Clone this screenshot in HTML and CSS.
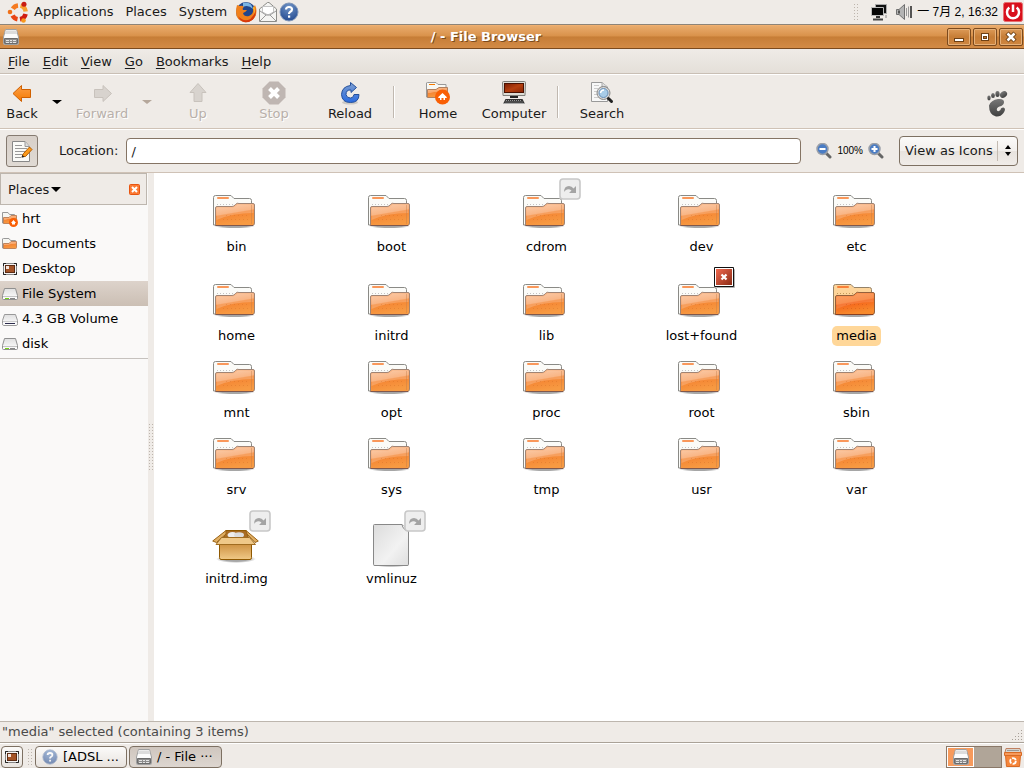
FILE: index.html
```html
<!DOCTYPE html>
<html lang="en">
<head>
<meta charset="utf-8">
<title>/ - File Browser</title>
<link rel="stylesheet" href="styles.css">
</head>
<body>
<svg class="sprite" aria-hidden="true">
  <defs>
    <linearGradient id="g-front" x1="0" y1="0" x2="0.3" y2="1"><stop offset="0" stop-color="#fac6a0"/><stop offset="0.5" stop-color="#f8a468"/><stop offset="0.55" stop-color="#f58634"/><stop offset="1" stop-color="#f79a42"/></linearGradient>
    <linearGradient id="g-hot" x1="0" y1="0" x2="0.3" y2="1"><stop offset="0" stop-color="#fb9a5a"/><stop offset="0.5" stop-color="#f98037"/><stop offset="0.55" stop-color="#f5661c"/><stop offset="1" stop-color="#f78a2c"/></linearGradient>
    <linearGradient id="g-drive" x1="0" y1="0" x2="0" y2="1"><stop offset="0" stop-color="#e0e0e0"/><stop offset="1" stop-color="#ffffff"/></linearGradient>
    <linearGradient id="g-orange" x1="0" y1="0" x2="0" y2="1"><stop offset="0" stop-color="#fba04a"/><stop offset="1" stop-color="#f57900"/></linearGradient>
    <linearGradient id="g-blue" x1="0" y1="0" x2="0" y2="1"><stop offset="0" stop-color="#7f9fd0"/><stop offset="1" stop-color="#2a6be0"/></linearGradient>
    <linearGradient id="g-screen" x1="0" y1="0" x2="1" y2="1"><stop offset="0" stop-color="#7a1c04"/><stop offset="0.5" stop-color="#b54010"/><stop offset="1" stop-color="#8a2404"/></linearGradient>
    <linearGradient id="g-box" x1="0" y1="0" x2="0" y2="1"><stop offset="0" stop-color="#c98a38"/><stop offset="1" stop-color="#f0c987"/></linearGradient>
    <linearGradient id="g-paper" x1="0" y1="0" x2="1" y2="1"><stop offset="0" stop-color="#dcdcdc"/><stop offset="0.6" stop-color="#f2f2f2"/><stop offset="1" stop-color="#dedede"/></linearGradient>
    <linearGradient id="g-foot" x1="0" y1="0" x2="0" y2="1"><stop offset="0" stop-color="#787878"/><stop offset="1" stop-color="#404040"/></linearGradient>
    <linearGradient id="g-red" x1="0" y1="0" x2="1" y2="1"><stop offset="0" stop-color="#f06a50"/><stop offset="1" stop-color="#8a2a14"/></linearGradient>
    <radialGradient id="g-help" cx="0.5" cy="0.2" r="0.9"><stop offset="0" stop-color="#6f93c6"/><stop offset="1" stop-color="#1d448c"/></radialGradient>
    <radialGradient id="g-shadow"><stop offset="0.6" stop-color="#000" stop-opacity="0.35"/><stop offset="1" stop-color="#000" stop-opacity="0"/></radialGradient>
  </defs>

  <symbol id="i-folder" viewBox="0 0 49 47">
    <rect x="2" y="34" width="41" height="4.500" rx="2" fill="url(#g-shadow)"/>
    <path d="M1.500 35V7.500Q1.500 5.500 3.500 5.500H19l3 3H37.500Q39.500 8.500 39.500 10.500V35Z" fill="#fbfbf8" stroke="#8a8a86"/>
    <path d="M5 14.500H24" stroke="#c4c4c4" stroke-dasharray="1 2"/>
    <rect x="5" y="7" width="12" height="2" rx="1" fill="#f9975a"/>
    <path d="M3.500 35.500V18Q3.500 16.500 5 16.500H20Q22 16.500 23.500 14.500T27 13.500H41Q42.500 13.500 42.500 15V33Q42.500 35.500 40.500 35.500Z" fill="url(#g-front)" stroke="#a08474"/>
    <path d="M4.500 30V19Q4.500 17.500 6 17.500H21Q23 17 24.500 15.500T28 14.500H41.500V23Q20 23 4.500 30Z" fill="#fff" opacity="0.2"/>
    <path d="M3.500 35.500H41" stroke="#80584c"/>
    <path d="M39.500 15V34" stroke="#c07c48" opacity="0.4"/>
    <path d="M14 25.500H38M11 29.500H38" stroke="#c86420" stroke-dasharray="1 3" opacity="0.3"/>
  </symbol>

  <symbol id="i-folder-hot" viewBox="0 0 49 47">
    <rect x="2" y="34" width="41" height="4.500" rx="2" fill="url(#g-shadow)"/>
    <path d="M1.500 35V7.500Q1.500 5.500 3.500 5.500H19l3 3H37.500Q39.500 8.500 39.500 10.500V35Z" fill="#fdd49a" stroke="#948268"/>
    <path d="M5 14.500H24" stroke="#c49a5c" stroke-dasharray="1 2"/>
    <rect x="5" y="7" width="12" height="2" rx="1" fill="#f98038"/>
    <path d="M3.500 35.500V18Q3.500 16.500 5 16.500H20Q22 16.500 23.500 14.500T27 13.500H41Q42.500 13.500 42.500 15V33Q42.500 35.500 40.500 35.500Z" fill="url(#g-hot)" stroke="#94603c"/>
    <path d="M4.500 30V19Q4.500 17.500 6 17.500H21Q23 17 24.500 15.500T28 14.500H41.500V23Q20 23 4.500 30Z" fill="#fff" opacity="0.12"/>
    <path d="M3.500 35.500H41" stroke="#8a4020"/>
    <path d="M14 25.500H38M11 29.500H38" stroke="#b04410" stroke-dasharray="1 3" opacity="0.3"/>
  </symbol>

  <symbol id="i-box" viewBox="0 0 49 47">
    <ellipse cx="24" cy="37" rx="20" ry="4" fill="url(#g-shadow)"/>
    <path d="M14 8.500H34L38 20H10Z" fill="#a86c24" stroke="#8f5902"/>
    <ellipse cx="20.500" cy="13" rx="5" ry="3" fill="#eee"/><ellipse cx="27" cy="13" rx="5" ry="2.800" fill="#ddd"/>
    <path d="M14 8.500L.7 19L4.500 20.500L14 12ZM34 8.500L46.300 19L43 20.500L35 12Z" fill="#e0ae62" stroke="#9a6214"/>
    <path d="M7.500 20V35.500Q7.500 37.500 9 37.500H38Q39.500 37.500 39.500 35.500V20Z" fill="url(#g-box)" stroke="#8f5902"/>
    <path d="M9.500 15.500H37.500L43.500 22.500H4Z" fill="#efc888" stroke="#a06c20"/>
  </symbol>

  <symbol id="i-page" viewBox="0 0 49 47">
    <rect x="5" y="41" width="38" height="4" rx="2" fill="url(#g-shadow)"/>
    <path d="M7.500 2.500H35L41.500 9V42.500Q41.500 43.500 40 43.500H8Q6.500 43.500 6.500 42.500V3.500Q6.500 2.500 7.500 2.500Z" fill="url(#g-paper)" stroke="#888"/>
    <path d="M35 2.500Q36 8 41.500 9" fill="#fff" stroke="#888"/>
  </symbol>

  <symbol id="i-link" viewBox="0 0 22 22">
    <rect x="1" y="1" width="20" height="20" rx="3" fill="#eee" stroke="#c8c8c8" stroke-width="1.600"/>
    <path d="M5 14Q5 8 10 8Q13 8 14.500 10.500L17 8V15H10L12.500 12.500Q10 10.500 8 11.500Q6 12 5 14Z" fill="#a4a4a4"/>
  </symbol>
  <symbol id="i-deny" viewBox="0 0 22 22">
    <rect x="2" y="2" width="19" height="19" rx="1" fill="#000" opacity="0.3"/>
    <rect x="0" y="0" width="20" height="20" rx="1" fill="#111"/><rect x="1" y="1" width="18" height="18" fill="#fff"/>
    <rect x="2" y="2" width="16" height="16" fill="url(#g-red)"/>
    <path d="M7.500 7.500L12.500 12.500M12.500 7.500L7.500 12.500" stroke="#fff" stroke-width="2.200"/>
  </symbol>

  <symbol id="i-cabinet" viewBox="0 0 16 16">
    <path d="M2.500 .5H13.500L15.500 8V14.500Q15.500 15.500 14.500 15.500H1.500Q.5 15.500 .5 14.500V8Z" fill="#fcfcfc" stroke="#a0a0a0"/>
    <path d="M2.500 1.500H13.500L14 5H2Z" fill="#dcdcdc"/>
    <path d="M1.500 9.500H14.500V14.500H1.500Z" fill="#8c8c8c" stroke="#6c6c6c"/>
    <path d="M3 11.500H6M7 11.500H9M10 11.500H13M3 13.500H6M7 13.500H9M10 13.500H13" stroke="#e4e4e4"/>
  </symbol>
  <symbol id="i-drive" viewBox="0 0 16 16">
    <path d="M2.500 2.500H13.500L15.500 9.500V12.500Q15.500 13.500 14.500 13.500H1.500Q.5 13.500 .5 12.500V9.500Z" fill="url(#g-drive)" stroke="#909090"/>
    <path d="M1 10.500H15" stroke="#c4c4c4"/><path d="M8 12.500H13" stroke="#888"/><path d="M3 12.500H7" stroke="#73d216"/>
  </symbol>
  <symbol id="i-volume" viewBox="0 0 16 16">
    <path d="M2.500 3.500H13.500L15.500 9.500V12.500Q15.500 14.500 14.500 14.500H1.500Q.5 14.500 .5 12.500V9.500Z" fill="url(#g-drive)" stroke="#999"/>
    <path d="M1 10.500H15" stroke="#ccc"/><path d="M3 12.500H13" stroke="#2c2c4c"/>
  </symbol>
  <symbol id="i-desktop" viewBox="0 0 16 16">
    <rect x="1.500" y="2.500" width="13" height="11" fill="#f4f4f4" stroke="#888"/>
    <rect x="3.500" y="4.500" width="9" height="7" fill="#a45428" stroke="#5c2c14"/><rect x="4" y="5" width="3" height="3" fill="#f4e4dc"/>
    <path d="M1.500 5V2.500H4M12 2.500H14.500V5M14.500 11V13.500H12M4 13.500H1.500V11" fill="none" stroke="#222"/>
  </symbol>
  <symbol id="i-folder-small" viewBox="0 0 16 16">
    <path d="M.5 12V3Q.5 2.500 1.500 2.500H7L8.500 4.500H13.500V12Z" fill="#f6f6f2" stroke="#999"/>
    <path d="M1.500 12.500V7.500H7L9 5.500H14.500V11.500Q14.500 12.500 13.500 12.500Z" fill="url(#g-front)" stroke="#c0845c"/>
  </symbol>
  <symbol id="i-home-small" viewBox="0 0 16 16">
    <path d="M.5 12V1.500H6L7.500 3.500H12.500V12Z" fill="#f6f6f2" stroke="#999"/>
    <path d="M1.500 12.500V6.500H7L9 4.500H14.500V12.500Z" fill="url(#g-front)" stroke="#c0845c"/>
    <circle cx="11.500" cy="11.500" r="4.500" fill="#f95f05"/><path d="M9 12L11.500 9L14 12H13V13.500H10V12Z" fill="#fff"/>
  </symbol>
  <symbol id="i-home" viewBox="0 0 24 24">
    <path d="M.5 16V2Q.5 1.500 1.500 1.500H10L12 3.500H20V16Z" fill="#f8f8f4" stroke="#999"/><path d="M3 3.500H9" stroke="#f57900"/>
    <path d="M1.500 16.500V8.500H10L13 6.500H21.500V16.500Z" fill="url(#g-front)" stroke="#b08060"/>
    <circle cx="16.500" cy="16" r="7.500" fill="#f95f05"/><path d="M12.300 16L16.500 12L20.700 16V17H19V19H17.500V17H15.500V19H14V17H12.300Z" fill="#fff"/>
  </symbol>
  <symbol id="i-computer" viewBox="0 0 24 24">
    <path d="M.5 1.500Q.5 .5 1.500 .5H22.500Q23.500 .5 23.500 1.500L23 14.500H1Z" fill="#ddddd6" stroke="#80807c"/>
    <rect x="2.500" y="2.500" width="19" height="9" fill="url(#g-screen)" stroke="#4a1000"/>
    <path d="M8 15H16V17H8Z" fill="#222"/><path d="M3.500 18H20.500L22.500 22H1.500Z" fill="#333"/>
    <path d="M4 19.500H20M3.500 21H21" stroke="#999" stroke-dasharray="1 1"/><path d="M1 22.500H23" stroke="#aaa"/>
  </symbol>
  <symbol id="i-search" viewBox="0 0 24 24">
    <path d="M1.500 1.500H12L17.500 6V20.500H1.500Z" fill="#f8f8f8" stroke="#999"/><path d="M12 1.500V6H17.500" fill="#ddd" stroke="#aaa"/>
    <path d="M4 4.500H9M4 7.500H8M4 10.500H7M4 13.500H8M4 16.500H9" stroke="#ccc"/>
    <circle cx="13.500" cy="12" r="6.500" fill="#d8d8d8" stroke="#888"/><circle cx="13.500" cy="12" r="4.500" fill="#a8cce8" stroke="#6a90b8"/>
    <path d="M10.500 12Q11 9 14 9" stroke="#fff" stroke-width="1.500" fill="none"/>
    <path d="M18.500 17.500L21.500 20.500" stroke="#222" stroke-width="3" stroke-linecap="round"/>
  </symbol>
  <symbol id="i-back" viewBox="0 0 24 24">
    <path d="M3 12.500L11.500 4.500V8.500H20.500V16.500H11.500V20.500Z" fill="url(#g-orange)" stroke="#d06000" stroke-linejoin="round"/>
  </symbol>
  <symbol id="i-forward" viewBox="0 0 24 24">
    <path d="M21.500 12.500L13 4.500V8.500H4.500V16.500H13V20.500Z" fill="#d8d3ce" stroke="#c8c2bc" stroke-linejoin="round"/>
  </symbol>
  <symbol id="i-up" viewBox="0 0 24 24">
    <path d="M12 2.500L20 11.500H16V20.500H8V11.500H4Z" fill="#d8d3ce" stroke="#c8c2bc" stroke-linejoin="round"/>
  </symbol>
  <symbol id="i-stop" viewBox="0 0 24 24">
    <path d="M7.500 .5H16.500L23.500 7.500V16.500L16.500 23.500H7.500L.5 16.500V7.500Z" fill="#bfb6b2"/>
    <path d="M7.500 7.500L16.500 16.500M16.500 7.500L7.500 16.500" stroke="#fff" stroke-width="4"/>
  </symbol>
  <symbol id="i-reload" viewBox="0 0 24 24">
    <ellipse cx="12" cy="21.500" rx="8" ry="2" fill="#000" opacity="0.15"/>
    <path d="M12.500 1.500L18.500 6.500L13 11.500V9Q8 8.500 8 13.500Q8.500 17 12.500 17Q15.500 17 16 13.500H21Q21 21.500 12.500 21.500Q4 21.500 3.500 13.500Q4 5.500 12.500 4.500Z" fill="url(#g-blue)" stroke="#24509c" stroke-linejoin="round"/>
  </symbol>
  <symbol id="i-edit" viewBox="0 0 24 24">
    <path d="M2.500 2.500H15L19.500 7.500V22.500H2.500Z" fill="#fbfbf8" stroke="#888"/><path d="M15 2.500V7.500H19.500" fill="#ddd" stroke="#999"/>
    <path d="M5 6.500H12M5 9.500H17M5 12.500H17M5 15.500H13M5 18.500H11" stroke="#999"/>
    <path d="M12 17.500L13.500 14.500L19.500 8L22 10.500L15.500 17.500Z" fill="#fb9a1c" stroke="#b45c00"/><path d="M11.500 18.800L12.500 16L14.500 18Z" fill="#222"/>
  </symbol>
  <symbol id="i-zoom-out" viewBox="0 0 16 16">
    <path d="M10.500 10.500L14 14" stroke="#666" stroke-width="3" stroke-linecap="round"/>
    <circle cx="6.500" cy="6" r="5.500" fill="#4a7cc4" stroke="#9a9fa8" stroke-width="1.500"/><rect x="3.500" y="5" width="6" height="2" fill="#fff"/>
  </symbol>
  <symbol id="i-zoom-in" viewBox="0 0 16 16">
    <path d="M10.500 10.500L14 14" stroke="#666" stroke-width="3" stroke-linecap="round"/>
    <circle cx="6.500" cy="6" r="5.500" fill="#4a7cc4" stroke="#9a9fa8" stroke-width="1.500"/><path d="M3.500 5H5.500V3H7.500V5H9.500V7H7.500V9H5.500V7H3.500Z" fill="#fff"/>
  </symbol>
  <symbol id="i-foot" viewBox="0 0 24 28">
    <g fill="url(#g-foot)"><ellipse cx="18.500" cy="4.500" rx="3.800" ry="3" transform="rotate(-35 18.500 4.500)"/><ellipse cx="12.500" cy="4" rx="2.100" ry="3"/><ellipse cx="8" cy="5.500" rx="1.900" ry="2.600"/><ellipse cx="4" cy="8" rx="1.700" ry="2.400"/>
    <path d="M4 15.500Q6 10 13 9Q19.500 8.500 19 12.500Q18.500 15.500 14.500 16.500Q11 18 12 20.500Q13.500 22 15.500 20Q15.500 17.500 18.500 17.500Q21.500 18.500 18.500 23Q15.500 27 11 26.500Q4 25 4 15.500Z"/></g>
  </symbol>
  <symbol id="i-ubuntu" viewBox="0 0 22 22">
    <g fill="none" stroke-width="4.500"><path d="M5.800 7.800A7 7 0 0 1 11 4.500" stroke="#f57a20"/><path d="M13.500 4.600A7 7 0 0 1 18.700 10.500" stroke="#f8a030"/><path d="M18.600 13A7 7 0 0 1 13 18.300" stroke="#d01c10"/><path d="M10.500 18.200A7 7 0 0 1 5.600 14.500" stroke="#e84414"/></g>
    <circle cx="3" cy="11" r="2.300" fill="#f07018"/><circle cx="17" cy="3.200" r="2.500" fill="#c81c14"/><circle cx="16.500" cy="19.500" r="2.300" fill="#f8981c"/>
  </symbol>
  <symbol id="i-firefox" viewBox="0 0 22 22">
    <circle cx="11" cy="11" r="10" fill="#22468c"/><path d="M8 2Q16 0 18 8Q13 3 8 6Z" fill="#7ab4e4"/>
    <path d="M2 4L5 5Q7 4 9 6Q7 7 8 9L12 9Q11 11 8 12Q9 16 14 15Q19 13 18 7L20 4Q23 10 20 16Q16 22 9 21Q1 19 1 11Q1 7 2 4Z" fill="#f0801c"/>
    <path d="M3 15Q7 20 13 19Q19 17 20 8Q22 14 18 18.500Q14 22 9 21Q5 20 3 15Z" fill="#d8380c"/><path d="M19 5Q21 11 18 15Q20 10 18 7Z" fill="#fcc838"/>
  </symbol>
  <symbol id="i-mail" viewBox="0 0 20 22">
    <path d="M1.500 8L9.500 1.500H11L18.500 8V20.500H1.500Z" fill="#f4f4f2" stroke="#8c8c88"/>
    <path d="M4.500 11V5.500H15.500V11L10 14Z" fill="#fff" stroke="#c4c4c4"/><path d="M2 10L8 14M18 10L12 14M2 20L8 14H12L18 20" fill="none" stroke="#999"/>
  </symbol>
  <symbol id="i-help" viewBox="0 0 20 20">
    <circle cx="10" cy="10" r="9" fill="url(#g-help)" stroke="#8096b8"/>
    <path d="M7 7.500Q7.200 5 10 5Q13 5 13 7.500Q13 9 11 10Q10 10.800 10 12" fill="none" stroke="#fff" stroke-width="2.200"/><rect x="9" y="13.500" width="2.200" height="2.200" fill="#fff"/>
  </symbol>
  <symbol id="i-network" viewBox="0 0 20 20">
    <path d="M6.500 2.500H17.500V11.500H6.500Z" fill="#111" stroke="#aaa"/><path d="M2.500 5.500H14.500V13.500H2.500Z" fill="#050505" stroke="#bbb"/>
    <path d="M7 15H11" stroke="#333" stroke-width="2"/><path d="M4 17.500H14" stroke="#444" stroke-width="2"/><path d="M17 13V16" stroke="#888"/>
  </symbol>
  <symbol id="i-sound" viewBox="0 0 20 20">
    <path d="M2.500 7.500H5L10.500 2.500V17.500L5 12.500H2.500Z" fill="#b4b4b4" stroke="#707070"/><path d="M4 8.500H6V11.500H4Z" fill="#555"/>
    <path d="M12.500 6V14M14.500 4.500V15.500" stroke="#999"/><path d="M17 4V16" stroke="#222" stroke-width="1.500"/>
  </symbol>
  <symbol id="i-power" viewBox="0 0 20 20">
    <rect x=".5" y=".5" width="19" height="19" rx="2" fill="#d8101c" stroke="#e87070"/>
    <path d="M6.300 5.500A6 6 0 1 0 13.700 5.500" fill="none" stroke="#fff" stroke-width="2.500"/><path d="M10 2.500V10" stroke="#fff" stroke-width="2.500"/>
  </symbol>
  <symbol id="i-trash" viewBox="0 0 18 20">
    <path d="M2 1.500H16L17 5.500H1Z" fill="#d8d4cc" stroke="#c08060"/><path d="M3 3.500H15" stroke="#999"/>
    <path d="M.5 5.500H17.500V8.500H.5Z" fill="#f79a5c" stroke="#d86a24"/>
    <path d="M1.500 8.500H16.500L15.500 19.500H2.500Z" fill="#f5853a" stroke="#d86a24"/><circle cx="9" cy="14" r="2.800" fill="none" stroke="#fff" stroke-width="1.800" stroke-dasharray="4.700 1.200"/>
  </symbol>
</svg>

<header class="panel">
  <nav class="panel-menu" aria-label="Desktop">
    <svg class="i22"><use href="#i-ubuntu"/></svg>
    <a href="#">Applications</a><a href="#">Places</a><a href="#">System</a>
  </nav>
  <div class="launchers">
    <svg class="i22"><use href="#i-firefox"/></svg>
    <svg class="i22"><use href="#i-mail"/></svg>
    <svg class="i20"><use href="#i-help"/></svg>
  </div>
  <div class="tray">
    <span class="grip"></span>
    <svg class="i20"><use href="#i-network"/></svg>
    <svg class="i20"><use href="#i-sound"/></svg>
    <time class="clock">一 7月 2, 16:32</time>
    <svg class="i20"><use href="#i-power"/></svg>
  </div>
</header>

<div class="titlebar">
  <svg class="i16"><use href="#i-cabinet"/></svg>
  <h1>/ - File Browser</h1>
  <div class="win-buttons">
    <button type="button" aria-label="Minimize"><svg viewBox="0 0 12 12"><rect x="1.500" y="7.500" width="9" height="3" fill="#fff" stroke="#6e4014"/></svg></button>
    <button type="button" aria-label="Maximize"><svg viewBox="0 0 12 12"><rect x="2.500" y="2.500" width="7" height="7" fill="#fff" stroke="#6e4014"/><rect x="4.500" y="5.500" width="3" height="2" fill="#c27a34" stroke="#6e4014"/></svg></button>
    <button type="button" aria-label="Close"><svg viewBox="0 0 12 12"><path d="M2 2L10 10M10 2L2 10" stroke="#6e4014" stroke-width="4.500"/><path d="M2.500 2.500L9.500 9.500M9.500 2.500L2.500 9.500" stroke="#fff" stroke-width="2.500"/></svg></button>
  </div>
</div>

<nav class="menubar" aria-label="Window menu">
  <a href="#"><u>F</u>ile</a><a href="#"><u>E</u>dit</a><a href="#"><u>V</u>iew</a><a href="#"><u>G</u>o</a><a href="#"><u>B</u>ookmarks</a><a href="#"><u>H</u>elp</a>
</nav>

<div class="toolbar">
  <button class="tool narrow" type="button"><svg class="i24"><use href="#i-back"/></svg>Back</button>
  <button class="drop" type="button" aria-label="Back history"></button>
  <button class="tool medium" type="button" disabled><svg class="i24"><use href="#i-forward"/></svg>Forward</button>
  <button class="drop" type="button" aria-label="Forward history" disabled></button>
  <button class="tool" type="button" disabled><svg class="i24"><use href="#i-up"/></svg>Up</button>
  <button class="tool" type="button" disabled><svg class="i24"><use href="#i-stop"/></svg>Stop</button>
  <button class="tool" type="button"><svg class="i24"><use href="#i-reload"/></svg>Reload</button>
  <span class="sep"></span>
  <button class="tool" type="button"><svg class="i24"><use href="#i-home"/></svg>Home</button>
  <button class="tool" type="button"><svg class="i24"><use href="#i-computer"/></svg>Computer</button>
  <span class="sep"></span>
  <button class="tool" type="button"><svg class="i24"><use href="#i-search"/></svg>Search</button>
  <svg class="foot"><use href="#i-foot"/></svg>
</div>

<div class="location">
  <button class="edit-toggle" type="button" aria-label="Edit location" aria-pressed="true"><svg class="i24"><use href="#i-edit"/></svg></button>
  <label for="loc">Location:</label>
  <input id="loc" type="text" value="/">
  <div class="zoom">
    <button type="button" aria-label="Zoom out"><svg class="i16"><use href="#i-zoom-out"/></svg></button>
    <span>100%</span>
    <button type="button" aria-label="Zoom in"><svg class="i16"><use href="#i-zoom-in"/></svg></button>
  </div>
  <div class="view">
    <select aria-label="View mode"><option>View as Icons</option></select>
    <svg class="spin" viewBox="0 0 8 12"><path d="M1 5L4 1L7 5ZM1 8L4 12L7 8Z"/></svg>
  </div>
</div>

<main class="content">
  <aside class="side">
    <div class="side-head">
      <button class="side-title" type="button">Places</button>
      <button class="side-close" type="button" aria-label="Close side pane"><svg viewBox="0 0 11 11"><rect x=".5" y=".5" width="10" height="10" rx="1" fill="#fb7a34" stroke="#e85410"/><path d="M3 3L8 8M8 3L3 8" stroke="#fff" stroke-width="2"/></svg></button>
    </div>
    <ul class="places">
      <li><svg class="i16"><use href="#i-home-small"/></svg>hrt</li>
      <li><svg class="i16"><use href="#i-folder-small"/></svg>Documents</li>
      <li><svg class="i16"><use href="#i-desktop"/></svg>Desktop</li>
      <li class="current"><svg class="i16"><use href="#i-drive"/></svg>File System</li>
      <li><svg class="i16"><use href="#i-volume"/></svg>4.3 GB Volume</li>
      <li><svg class="i16"><use href="#i-drive"/></svg>disk</li>
    </ul>
  </aside>
  <div class="splitter"><span class="grip"></span></div>
  <ul class="files">
    <li class="file"><div class="pic"><svg><use href="#i-folder"/></svg></div><span>bin</span></li>
    <li class="file"><div class="pic"><svg><use href="#i-folder"/></svg></div><span>boot</span></li>
    <li class="file marked"><div class="pic"><svg><use href="#i-folder"/></svg><svg class="emblem"><use href="#i-link"/></svg></div><span>cdrom</span></li>
    <li class="file"><div class="pic"><svg><use href="#i-folder"/></svg></div><span>dev</span></li>
    <li class="file"><div class="pic"><svg><use href="#i-folder"/></svg></div><span>etc</span></li>
    <li class="file"><div class="pic"><svg><use href="#i-folder"/></svg></div><span>home</span></li>
    <li class="file"><div class="pic"><svg><use href="#i-folder"/></svg></div><span>initrd</span></li>
    <li class="file"><div class="pic"><svg><use href="#i-folder"/></svg></div><span>lib</span></li>
    <li class="file marked"><div class="pic"><svg><use href="#i-folder"/></svg><svg class="emblem"><use href="#i-deny"/></svg></div><span>lost+found</span></li>
    <li class="file selected"><div class="pic"><svg><use href="#i-folder-hot"/></svg></div><span>media</span></li>
    <li class="file"><div class="pic"><svg><use href="#i-folder"/></svg></div><span>mnt</span></li>
    <li class="file"><div class="pic"><svg><use href="#i-folder"/></svg></div><span>opt</span></li>
    <li class="file"><div class="pic"><svg><use href="#i-folder"/></svg></div><span>proc</span></li>
    <li class="file"><div class="pic"><svg><use href="#i-folder"/></svg></div><span>root</span></li>
    <li class="file"><div class="pic"><svg><use href="#i-folder"/></svg></div><span>sbin</span></li>
    <li class="file"><div class="pic"><svg><use href="#i-folder"/></svg></div><span>srv</span></li>
    <li class="file"><div class="pic"><svg><use href="#i-folder"/></svg></div><span>sys</span></li>
    <li class="file"><div class="pic"><svg><use href="#i-folder"/></svg></div><span>tmp</span></li>
    <li class="file"><div class="pic"><svg><use href="#i-folder"/></svg></div><span>usr</span></li>
    <li class="file"><div class="pic"><svg><use href="#i-folder"/></svg></div><span>var</span></li>
    <li class="file marked"><div class="pic"><svg><use href="#i-box"/></svg><svg class="emblem"><use href="#i-link"/></svg></div><span>initrd.img</span></li>
    <li class="file marked"><div class="pic"><svg><use href="#i-page"/></svg><svg class="emblem"><use href="#i-link"/></svg></div><span>vmlinuz</span></li>
  </ul>
</main>

<div class="status"><span>"media" selected (containing 3 items)</span><svg class="resize" viewBox="0 0 12 12"><path d="M9.500 0V12M6.500 3V12M3.500 6V12M.5 9V12" stroke="#a8a098" stroke-dasharray="1 2"/></svg></div>

<footer class="taskbar">
  <button class="show-desktop" type="button" aria-label="Show desktop"><svg class="i16"><use href="#i-desktop"/></svg></button>
  <span class="grip"></span>
  <button class="task" type="button"><svg class="i16 dim"><use href="#i-help"/></svg>[ADSL ...</button>
  <button class="task active" type="button"><svg class="i16"><use href="#i-cabinet"/></svg>/ - File ···</button>
  <div class="pager"><div class="desk on"><svg class="i16"><use href="#i-cabinet"/></svg></div><div class="desk"></div></div>
  <svg class="trash"><use href="#i-trash"/></svg>
</footer>
</body>
</html>
```
FILE: styles.css
```css
* { box-sizing: border-box; }
body {
  margin: 0;
  min-height: 100vh;
  display: flex;
  flex-direction: column;
  background: #efebe7;
  color: #1a1a1a;
  font: 13px/16px "DejaVu Sans", "Noto Sans CJK SC", sans-serif;
}
button, input, select { font: inherit; color: inherit; }
button { border: 0; padding: 0; background: none; }
a { color: inherit; text-decoration: none; }
ul { list-style: none; margin: 0; padding: 0; }
svg { display: block; flex: none; }
.sprite { position: absolute; width: 0; height: 0; }
.i16 { width: 16px; height: 16px; }
.i20 { width: 20px; height: 20px; }
.i22 { width: 22px; height: 22px; }
.i24 { width: 24px; height: 24px; }
.grip {
  width: 6px;
  height: 18px;
  background: radial-gradient(circle, #bdb5ad 35%, transparent 45%) 0 0 / 3px 3px;
}

.panel {
  display: flex;
  align-items: center;
  height: 25px;
  padding: 0 1px 1px 7px;
  border-bottom: 1px solid #8d8478;
}
.panel-menu { display: flex; align-items: center; gap: 12px; }
.panel-menu svg { margin-right: -7px; }
.launchers { display: flex; align-items: center; margin-left: 8px; }
.tray { display: flex; align-items: center; margin-left: auto; }
.tray .grip { margin-right: 10px; }
.tray .i20 + .i20 { margin-left: 5px; }
.clock { margin: 0 5px 0 3px; font: 12px/16px "Liberation Sans", "Noto Sans CJK SC", sans-serif; color: #000; }

.titlebar {
  display: flex;
  align-items: center;
  height: 24px;
  padding: 0 1px 0 3px;
  border-top: 1px solid #f0b070;
  border-bottom: 1px solid #7b4a1e;
  background: linear-gradient(#e8ab6c, #d9924b 45%, #c67d36 50%, #d38b46);
}
.titlebar h1 {
  flex: 1;
  margin: 0;
  padding-left: 6px;
  text-align: center;
  font-size: 13px;
  line-height: 16px;
  color: #fff;
  text-shadow: 1px 1px 0 #7b4a1e;
}
.win-buttons { display: flex; gap: 2px; }
.win-buttons button {
  display: grid;
  place-items: center;
  width: 24px;
  height: 18px;
  border: 1px solid #7b4a1e;
  border-radius: 2px;
  box-shadow: inset 0 0 0 1px #e6b078;
  background: linear-gradient(#dc9a58, #c67d36 50%, #cf8640);
}
.win-buttons svg { width: 12px; height: 12px; }

.menubar {
  display: flex;
  align-items: center;
  gap: 13px;
  height: 25px;
  padding: 1px 0 0 8px;
  border-bottom: 1px solid #c9bfb5;
  background: linear-gradient(#efebe7, #e4dfd9);
}
u { text-underline-offset: 2px; }

.toolbar {
  display: flex;
  align-items: center;
  height: 55px;
  border-top: 1px solid #fff;
  border-bottom: 1px solid #cfc2b6;
}
.tool {
  display: flex;
  flex-direction: column;
  align-items: center;
  gap: 1px;
  width: 76px;
  line-height: 16px;
}
.tool.narrow { width: 44px; }
.tool.medium { width: 64px; }
.tool:disabled { color: #b8b0aa; text-shadow: 1px 1px 0 #fff; }
.drop { width: 26px; height: 24px; display: grid; place-items: center; }
.drop::before { content: ""; border: 5px solid transparent; border-top: 4px solid #000; border-bottom: 0; }
.drop:disabled::before { border-top-color: #b5a79b; }
.sep { width: 2px; height: 32px; margin: 0 5px; border-left: 1px solid #c0b8b0; border-right: 1px solid #fff; }
.foot { width: 24px; height: 28px; margin: 4px 15px 0 auto; }

.location {
  display: flex;
  align-items: center;
  height: 44px;
  padding: 0 6px;
  border-top: 1px solid #fff;
  border-bottom: 1px solid #cfc2b6;
}
.edit-toggle {
  display: grid;
  place-items: center;
  width: 32px;
  height: 32px;
  border: 1px solid #857a70;
  border-radius: 3px;
  background: linear-gradient(#d8d0c9, #e0dad4);
}
.location label { margin: 0 8px 0 21px; }
.location input {
  flex: 1;
  min-width: 0;
  height: 26px;
  padding: 0 4px;
  border: 1px solid #857464;
  border-radius: 4px;
  background: #fff;
}
.zoom { display: flex; align-items: center; gap: 5px; margin: 0 15px; }
.zoom span { font: 10px/16px "Liberation Sans", sans-serif; color: #000; }
.view { position: relative; }
.view select {
  appearance: none;
  width: 119px;
  height: 30px;
  padding: 0 20px 0 5px;
  border: 1px solid #7d7062;
  border-radius: 4px;
  background: linear-gradient(#c4bbb2, #c4bbb2) right 19px center / 1px 20px no-repeat, linear-gradient(#fbfaf9, #f2efec 50%, #e8e3de 51%, #f0ece8);
}
.spin { position: absolute; right: 6px; top: 8px; width: 8px; height: 12px; pointer-events: none; }

.content { flex: 1; display: flex; background: #fff; }
.side { width: 148px; background: #faf9f8; }
.side-head {
  display: flex;
  align-items: center;
  justify-content: space-between;
  height: 32px;
  margin-right: 1px;
  padding: 1px 6px 0 7px;
  border: 1px solid #bdb6ae;
  background: #efebe7;
}
.side-title { display: flex; align-items: center; gap: 2px; }
.side-title::after { content: ""; border: 5px solid transparent; border-top-color: #000; border-bottom: 0; }
.side-close svg { width: 11px; height: 11px; }
.places { padding: 1px 0 2px; border-bottom: 1px solid #c6c2be; }
.places li { display: flex; align-items: center; gap: 4px; height: 25px; padding-left: 2px; color: #000; }
.places .current { background: linear-gradient(#ddd3cb, #cbbfb4); }
.splitter { display: grid; place-items: center; width: 6px; background: #efebe7; }
.splitter .grip { height: 48px; }
.files {
  flex: 1;
  display: grid;
  grid-template-columns: repeat(auto-fill, 155px);
  align-content: start;
  align-items: end;
  padding: 5px;
  color: #000;
}
.file { display: flex; flex-direction: column; align-items: center; padding-bottom: 10px; }
.file.marked { padding-top: 12px; }
.pic { position: relative; }
.pic svg { width: 49px; height: 47px; }
.pic .emblem { position: absolute; left: 37px; top: -12px; width: 22px; height: 22px; }
.file span { padding: 2px 4px; border-radius: 5px; }
.selected span { background: #ffd799; }

.status {
  display: flex;
  align-items: center;
  justify-content: space-between;
  height: 21px;
  padding-left: 2px;
  border-top: 1px solid #bdb6ae;
  color: #4a4a4a;
}
.resize { width: 12px; height: 12px; align-self: flex-end; }

.taskbar {
  display: flex;
  align-items: center;
  height: 26px;
  padding: 2px 2px 0 1px;
  border-top: 1px solid #aaa298;
  box-shadow: inset 0 1px 0 #fff;
}
.show-desktop, .task {
  display: flex;
  align-items: center;
  height: 22px;
  border: 1px solid #7d7062;
  border-radius: 4px;
  background: linear-gradient(#fbfaf9, #e8e3de);
}
.show-desktop { width: 22px; justify-content: center; }
.taskbar .grip { margin: 0 2px 0 4px; }
.task { width: 92px; gap: 5px; padding: 0 6px; white-space: nowrap; color: #000; }
.task + .task { width: 93px; margin-left: 2px; }
.task.active { background: linear-gradient(#cfc6be, #ddd6d0); }
.dim { opacity: 0.6; }
.pager { display: flex; height: 22px; margin-left: auto; border: 1px solid #8a7868; }
.desk { display: grid; place-items: center; width: 27px; background: #b0a598; }
.desk.on { background: #f79a5c; box-shadow: inset 0 0 0 1px #fff; }
.trash { width: 18px; height: 20px; margin-left: 2px; }
```
